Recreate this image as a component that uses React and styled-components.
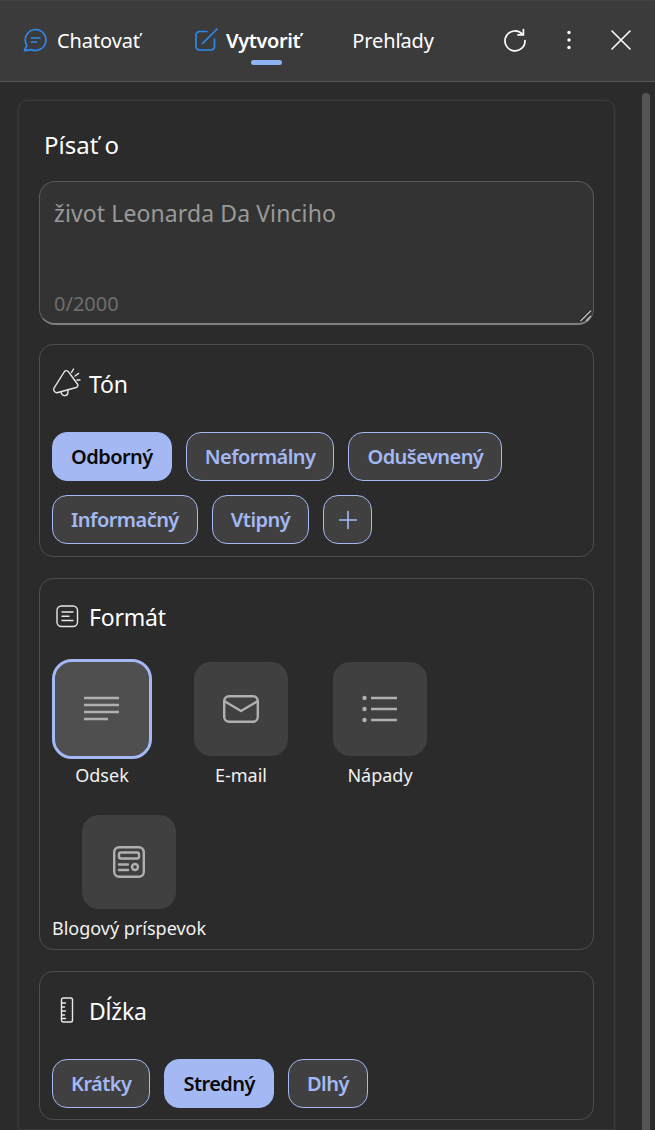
import styled, { createGlobalStyle } from "styled-components";

const GlobalStyle = createGlobalStyle`
    html, body {
        margin: 0;
        height: 100%;
        overflow: hidden;
        background: #2b2b2b;
        font-family: "Noto Sans", "Open Sans", sans-serif;
    }
    * { box-sizing: border-box; }
`;

const Page = styled.div`
    width: 655px;
    height: 1130px;
    display: flex;
    flex-direction: column;
    overflow: hidden;
    background: #2b2b2b;
`;

const Header = styled.header`
    flex: none;
    height: 82px;
    display: flex;
    align-items: center;
    padding: 0 24px 2px 22px;
    background: #3b3b3b;
    border-bottom: 1px solid #565656;
    border-top: 1px solid #434343;
`;

const Tab = styled.div`
    position: relative;
    display: flex;
    align-items: center;
    gap: ${props => props.$gap || 9}px;
    margin-right: ${props => props.$space || 0}px;
    color: #fff;
    font-size: 20px;
    font-weight: ${props => props.$active ? 600 : 400};
    letter-spacing: ${props => props.$active ? -0.4 : -0.1}px;
`;

const TabMarker = styled.span`
    position: absolute;
    left: 57px;
    bottom: -11px;
    width: 31px;
    height: 5px;
    border-radius: 2.5px;
    background: #8fb4f5;
`;

const HeaderActions = styled.div`
    margin-left: auto;
    display: flex;
    align-items: center;
    gap: 39px;
    color: #fff;
`;

const Body = styled.div`
    flex: 1;
    display: flex;
    min-height: 0;
    padding: 11px 5px 0 18px;
    gap: 27px;
`;

const Card = styled.main`
    width: 597px;
    flex: none;
    margin-top: 7px;
    padding: 26px 20px 0 20px;
    border: 1px solid #3a3a3a;
    border-radius: 10px 10px 0 0;
    box-shadow: 0 0 3px #3c3c3c;
    display: flex;
    flex-direction: column;
`;

const Scrollbar = styled.div`
    width: 8px;
    flex: none;
    border-radius: 4px 4px 0 0;
    background: #555;
`;

const Heading = styled.h1`
    margin: 0 0 18px 5px;
    font-size: 24px;
    line-height: 36px;
    font-weight: 400;
    color: #fff;
`;

const TextBox = styled.div`
    position: relative;
    height: 144px;
    padding: 15px 14px 6px;
    display: flex;
    flex-direction: column;
    justify-content: space-between;
    background: #333;
    border: 1px solid #5a5a5a;
    border-bottom: 2px solid #808080;
    border-radius: 16px;
`;

const Prompt = styled.div`
    font-size: 23px;
    line-height: 32px;
    color: #999;
    letter-spacing: 0.1px;
`;

const Counter = styled.div`
    font-size: 20px;
    line-height: 26px;
    color: #6e6e6e;
`;

const Grip = styled.svg`
    position: absolute;
    right: 1px;
    bottom: 1px;
`;

const Section = styled.section`
    margin-top: ${props => props.$top || 21}px;
    height: ${props => props.$height}px;
    padding: ${props => props.$pad || 20}px 12px 0 12px;
    border: 1px solid #4e4e4e;
    border-radius: 14px;
`;

const SectionTitle = styled.h2`
    margin: 0;
    height: 38px;
    display: flex;
    align-items: center;
    gap: 8px;
    font-size: 23px;
    font-weight: 400;
    color: #fff;
    letter-spacing: -0.2px;
`;

const IconSlot = styled.span`
    width: 29px;
    height: 30px;
    flex: none;
    margin-bottom: 3px;
    display: flex;
    align-items: center;
    justify-content: center;
    color: #e8e8e8;
`;

const PillRow = styled.div`
    display: flex;
    flex-wrap: wrap;
    gap: 14px;
    margin-top: ${props => props.$top}px;
`;

const Pill = styled.button`
    height: 49px;
    min-width: 49px;
    padding: 0 ${props => props.$plain ? 0 : 18}px;
    display: flex;
    align-items: center;
    justify-content: center;
    border-radius: 15px;
    border: 1px solid #a4b9f4;
    background: ${props => props.$active ? "#a4b9f4" : "#404040"};
    color: ${props => props.$active ? "#0a0a0a" : "#a4b9f4"};
    font-family: inherit;
    font-size: 20px;
    font-weight: 600;
    letter-spacing: -0.55px;
`;

const FormatGrid = styled.div`
    display: flex;
    flex-wrap: wrap;
    column-gap: 39px;
    row-gap: 25px;
    margin-top: 23px;
`;

const FormatItem = styled.div`
    min-width: 100px;
    display: flex;
    flex-direction: column;
    align-items: center;
    gap: 4px;
`;

const FormatTile = styled.div`
    width: 100px;
    height: 100px;
    display: flex;
    align-items: center;
    justify-content: center;
    border-radius: 20px;
    color: #b0b0b0;
    background: ${props => props.$active ? "#4f4f4f" : "#404040"};
    background-clip: padding-box;
    border: 3px solid ${props => props.$active ? "#a4b9f4" : "transparent"};
`;

const FormatLabel = styled.span`
    font-size: 18px;
    line-height: 24px;
    color: #f2f2f2;
    white-space: nowrap;
`;

const ChatIcon = () => (
    <svg width="26" height="26" viewBox="0 0 26 26" fill="none">
        <defs>
            <linearGradient id="chatGrad" x1="2" y1="24" x2="24" y2="2">
                <stop offset="0" stopColor="#2aa3f0" />
                <stop offset="1" stopColor="#2f6fe8" />
            </linearGradient>
        </defs>
        <path d="M13.5 2.5a10.5 10.5 0 1 1-4.3 20.1L2.5 23.6l2.3-5.2A10.5 10.5 0 0 1 13.5 2.5Z" stroke="url(#chatGrad)" strokeWidth="1.7" strokeLinejoin="round" />
        <path d="M9.5 11h8.2M9.5 15h5" stroke="url(#chatGrad)" strokeWidth="1.7" strokeLinecap="round" />
    </svg>
);

const CreateIcon = () => (
    <svg width="24" height="24" viewBox="0 0 24 24" fill="none">
        <defs>
            <linearGradient id="createGrad" x1="1" y1="23" x2="23" y2="1">
                <stop offset="0" stopColor="#2bb0ee" />
                <stop offset="1" stopColor="#2a63e4" />
            </linearGradient>
        </defs>
        <path d="M13 3.5H5.5A3.5 3.5 0 0 0 2 7v11.5A3.5 3.5 0 0 0 5.5 22H17a3.5 3.5 0 0 0 3.5-3.5V11" stroke="url(#createGrad)" strokeWidth="1.7" strokeLinecap="round" />
        <path d="M8.5 15.5 23 1" stroke="url(#createGrad)" strokeWidth="1.7" strokeLinecap="round" />
    </svg>
);

const RefreshIcon = () => (
    <svg width="24" height="24" viewBox="0 0 24 24" fill="none" stroke="currentColor" strokeWidth="1.7">
        <path d="M19.4 6.2A10 10 0 1 0 22 12.5" strokeLinecap="round" />
        <path d="M20.4 1.5v5.4H15" strokeLinecap="round" strokeLinejoin="round" />
    </svg>
);

const MoreIcon = () => (
    <svg width="6" height="20" viewBox="0 0 6 20" fill="currentColor">
        <circle cx="3" cy="2.5" r="1.7" />
        <circle cx="3" cy="10" r="1.7" />
        <circle cx="3" cy="17.5" r="1.7" />
    </svg>
);

const CloseIcon = () => (
    <svg width="20" height="20" viewBox="0 0 20 20" fill="none" stroke="currentColor" strokeWidth="1.6" strokeLinecap="round">
        <path d="M1 1 19 19M19 1 1 19" />
    </svg>
);

const MegaphoneIcon = () => (
    <svg width="28" height="30" viewBox="0 0 28 30" fill="none" stroke="currentColor" strokeWidth="1.4" strokeLinecap="round" strokeLinejoin="round">
        <path d="M11.5 3.5c1-1.3 3-1.2 3.9.2l9 12.3c.9 1.3.3 3-1.2 3.5L5 24.5c-1.4.4-2.8-.1-3.6-1.2-.8-1.1-.8-2.5-.1-3.6L11.5 3.5Z" />
        <path d="M8 23.8c.2 2.6 2 4.2 4.2 3.8 2-.4 3.2-2.3 2.7-5.6" />
        <path d="M18.5 4.5 20.5 1M22 8l3.6-2.6M24 12h3" />
    </svg>
);

const FormatIcon = () => (
    <svg width="24" height="24" viewBox="0 0 24 24" fill="none" stroke="currentColor" strokeWidth="1.4" strokeLinecap="round">
        <rect x="2" y="2" width="20.5" height="20.5" rx="4.5" />
        <path d="M7 8h11M7 12.2h7M7 16.5h11" />
    </svg>
);

const RulerIcon = () => (
    <svg width="14" height="26" viewBox="0 0 14 26" fill="none" stroke="currentColor" strokeWidth="1.4" strokeLinecap="round">
        <rect x="1.5" y="1" width="11" height="24" rx="1.8" />
        <path d="M1.5 6h4M1.5 10h3M1.5 14h4M1.5 18h3M1.5 21.5h4" />
    </svg>
);

const ParagraphIcon = () => (
    <svg width="36" height="28" viewBox="0 0 36 28" fill="none" stroke="currentColor" strokeWidth="2.4">
        <path d="M0 3h35M0 10h35M0 17h35M0 24h24" />
    </svg>
);

const MailIcon = () => (
    <svg width="36" height="28" viewBox="0 0 36 28" fill="none" stroke="currentColor" strokeWidth="2.4" strokeLinejoin="round" strokeLinecap="round">
        <rect x="1.2" y="1.2" width="33.6" height="25.6" rx="5" />
        <path d="M2 6.5 18 16 34 6.5" />
    </svg>
);

const ListIcon = () => (
    <svg width="36" height="28" viewBox="0 0 36 28" fill="none" stroke="currentColor" strokeWidth="2.4">
        <circle cx="2.5" cy="3" r="2.2" fill="currentColor" stroke="none" />
        <circle cx="2.5" cy="14" r="2.2" fill="currentColor" stroke="none" />
        <circle cx="2.5" cy="25" r="2.2" fill="currentColor" stroke="none" />
        <path d="M9 3h26M9 14h26M9 25h26" />
    </svg>
);

const BlogIcon = () => (
    <svg width="32" height="32" viewBox="0 0 32 32" fill="none" stroke="currentColor" strokeWidth="2.4" strokeLinecap="round">
        <rect x="1.2" y="1.2" width="29.6" height="29.6" rx="5" />
        <rect x="6" y="6.5" width="20" height="6" rx="2" />
        <path d="M6 18.5h9M6 24h9" />
        <circle cx="22" cy="21" r="3" />
    </svg>
);

const tones = [["Odborný", true], ["Neformálny"], ["Oduševnený"], ["Informačný"], ["Vtipný"]];
const formats = [
    ["Odsek", <ParagraphIcon />, true],
    ["E-mail", <MailIcon />],
    ["Nápady", <ListIcon />],
    ["Blogový príspevok", <BlogIcon />],
];
const lengths = [["Krátky"], ["Stredný", true], ["Dlhý"]];

const App = () => {
    return (
        <Page>
            <GlobalStyle />
            <Header>
                <Tab $space={54}><ChatIcon /> Chatovať</Tab>
                <Tab $active $gap={8} $space={52}>
                    <CreateIcon /> Vytvoriť
                    <TabMarker />
                </Tab>
                <Tab>Prehľady</Tab>
                <HeaderActions>
                    <RefreshIcon />
                    <MoreIcon />
                    <CloseIcon />
                </HeaderActions>
            </Header>
            <Body>
                <Card>
                    <Heading>Písať o</Heading>
                    <TextBox>
                        <Prompt>život Leonarda Da Vinciho</Prompt>
                        <Counter>0/2000</Counter>
                        <Grip width="14" height="14" viewBox="0 0 14 14" fill="none">
                            <path d="M1.5 12.5 12.5 1.5" stroke="#111" strokeWidth="1" />
                            <path d="M2.5 13 13 2.5" stroke="#bbb" strokeWidth="1.4" />
                            <path d="M8 13 13 8" stroke="#bbb" strokeWidth="1.4" />
                        </Grip>
                    </TextBox>

                    <Section $top={19} $height={213}>
                        <SectionTitle><IconSlot><MegaphoneIcon /></IconSlot> Tón</SectionTitle>
                        <PillRow $top={29}>
                            {tones.map(([label, active]) => (
                                <Pill key={label} $active={active}>{label}</Pill>
                            ))}
                            <Pill $plain aria-label="Pridať">
                                <svg width="20" height="20" viewBox="0 0 20 20" stroke="currentColor" strokeWidth="1.6">
                                    <path d="M10 1v18M1 10h18" />
                                </svg>
                            </Pill>
                        </PillRow>
                    </Section>

                    <Section $height={372} $pad={19}>
                        <SectionTitle><IconSlot><FormatIcon /></IconSlot> Formát</SectionTitle>
                        <FormatGrid>
                            {formats.map(([label, icon, active]) => (
                                <FormatItem key={label}>
                                    <FormatTile $active={active}>{icon}</FormatTile>
                                    <FormatLabel>{label}</FormatLabel>
                                </FormatItem>
                            ))}
                        </FormatGrid>
                    </Section>

                    <Section $height={149}>
                        <SectionTitle><IconSlot><RulerIcon /></IconSlot> Dĺžka</SectionTitle>
                        <PillRow $top={29}>
                            {lengths.map(([label, active]) => (
                                <Pill key={label} $active={active}>{label}</Pill>
                            ))}
                        </PillRow>
                    </Section>
                </Card>
                <Scrollbar />
            </Body>
        </Page>
    );
};

export default App;
